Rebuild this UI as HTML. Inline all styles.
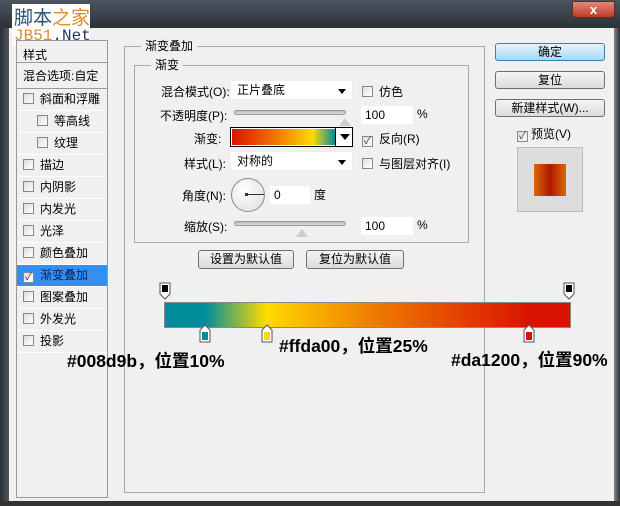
<!DOCTYPE html>
<html><head><meta charset="utf-8"><style>
*{box-sizing:border-box;margin:0;padding:0}
body{width:620px;height:506px;overflow:hidden;background:#f0f0f0;font-family:"Liberation Sans","Noto Sans CJK SC",sans-serif;font-size:12px;color:#000;position:relative}
.a{position:absolute}
.title{left:0;top:0;width:620px;height:28px;background:linear-gradient(#4a5560,#2b3138)}
.frameL{left:0;top:28px;width:9px;height:478px;background:linear-gradient(90deg,#2b3138,#555)}
.frameR{left:614px;top:28px;width:6px;height:478px;background:linear-gradient(90deg,#888,#2b3138)}
.frameB{left:0;top:501px;width:620px;height:5px;background:#333}
.close{left:572px;top:1px;width:43px;height:17px;border-radius:0 0 4px 4px;background:linear-gradient(#e08a7a,#c0392b);border:1px solid #6a2a22;color:#fff;font-weight:bold;text-align:center;font-size:13px;line-height:15px}
.wm{left:12px;top:4px;width:78px;height:42px;background:#fff}
.panel{left:16px;top:40px;width:92px;height:458px;border:1px solid #999;background:#f0f0f0}
.row{position:absolute;left:0;width:90px;height:22px;border-bottom:1px solid #fff;line-height:21px;font-size:12px}
.cb{display:inline-block;width:11px;height:11px;border:1px solid #888;background:linear-gradient(135deg,#ddd,#fff);vertical-align:-1px;margin-right:6px}
.grp{border:1px solid #aaa}
.lbl{position:absolute;background:#f0f0f0;padding:0 4px;font-size:12px}
.sel{position:absolute;background:#fff;height:20px;border:1px solid #eee;line-height:19px;padding-left:6px}
.sel:after{content:"";position:absolute;right:6px;top:8px;border:4px solid transparent;border-top:5px solid #000}
.btn{position:absolute;border:1px solid #707070;border-radius:3px;background:linear-gradient(#f4f4f4,#dcdcdc);text-align:center;line-height:16px;font-size:12px}
.slider{position:absolute;height:5px;border:1px solid #999;border-radius:3px;background:linear-gradient(#bbb,#ddd)}
.inp{position:absolute;background:#fff;height:18px;padding-left:4px;line-height:18px}
.big{position:absolute;font-weight:bold;font-size:17.5px;white-space:nowrap}
</style></head><body>
<div class="a title"></div>
<div class="a frameL"></div><div class="a frameR"></div><div class="a frameB"></div>
<div class="a close">x</div>
<div class="a wm"></div>
<div class="a" style="left:14px;top:3px;font-size:19px;color:#2a4f7a">脚本<span style="color:#e08a2a">之家</span></div>
<div class="a" style="left:14px;top:27px;font-size:16px;font-family:'Liberation Mono',monospace;color:#1b3a5c"><span style="color:#e08a2a">JB51</span>.Net</div>

<div class="a panel">
<div class="row" style="top:0;padding-left:6px;height:22px;padding-top:2px;line-height:24px;border-bottom:1px solid #999">样式</div>
<div class="row" style="top:23px;padding-left:6px;height:25px;line-height:24px;border-bottom:1px solid #999">混合选项:自定</div>
<div class="row" style="top:48px;padding-left:6px"><span class="cb"></span>斜面和浮雕</div>
<div class="row" style="top:70px;padding-left:20px"><span class="cb"></span>等高线</div>
<div class="row" style="top:92px;padding-left:20px"><span class="cb"></span>纹理</div>
<div class="row" style="top:114px;padding-left:6px"><span class="cb"></span>描边</div>
<div class="row" style="top:136px;padding-left:6px"><span class="cb"></span>内阴影</div>
<div class="row" style="top:158px;padding-left:6px"><span class="cb"></span>内发光</div>
<div class="row" style="top:180px;padding-left:6px"><span class="cb"></span>光泽</div>
<div class="row" style="top:202px;padding-left:6px"><span class="cb"></span>颜色叠加</div>
<div class="row" style="top:224px;padding-left:6px;background:#3390f0;color:#102050"><span class="cb" style="font-size:10px;line-height:9px;text-align:center;color:#334">✓</span>渐变叠加</div>
<div class="row" style="top:246px;padding-left:6px"><span class="cb"></span>图案叠加</div>
<div class="row" style="top:268px;padding-left:6px"><span class="cb"></span>外发光</div>
<div class="row" style="top:290px;padding-left:6px"><span class="cb"></span>投影</div>
</div>

<div class="a grp" style="left:124px;top:46px;width:361px;height:447px"></div>
<div class="lbl" style="left:141px;top:37px">渐变叠加</div>
<div class="a grp" style="left:134px;top:65px;width:335px;height:178px"></div>
<div class="lbl" style="left:151px;top:56px">渐变</div>

<div class="a" style="left:161px;top:83px">混合模式(O):</div>
<div class="sel" style="left:230px;top:80px;width:123px">正片叠底</div>
<div class="a" style="left:362px;top:83px"><span class="cb"></span>仿色</div>
<div class="a" style="left:160px;top:107px">不透明度(P):</div>
<div class="slider" style="left:234px;top:110px;width:112px"></div>
<div class="a" style="left:339px;top:112px;width:0;height:0;border:6px solid transparent;border-bottom:8px solid #ccc;"></div>
<div class="inp" style="left:361px;top:106px;width:52px">100</div>
<div class="a" style="left:417px;top:107px">%</div>
<div class="a" style="left:194px;top:130px">渐变:</div>
<div class="a" style="left:230px;top:127px;width:123px;height:20px;border:1px solid #000;background:#fff"></div>
<div class="a" style="left:232px;top:129px;width:103px;height:16px;background:linear-gradient(90deg,#da1200,#f07000 40%,#ffda00 78%,#008d9b)"></div>
<div class="a" style="left:335px;top:128px;width:1px;height:18px;background:#000"></div>
<div class="a" style="left:340px;top:134px;border:5px solid transparent;border-top:6px solid #000"></div>
<div class="a" style="left:362px;top:130px"><span class="cb" style="font-size:10px;line-height:9px;text-align:center;color:#335">✓</span>反向(R)</div>
<div class="a" style="left:184px;top:155px">样式(L):</div>
<div class="sel" style="left:230px;top:151px;width:123px">对称的</div>
<div class="a" style="left:362px;top:155px"><span class="cb"></span>与图层对齐(I)</div>
<div class="a" style="left:182px;top:187px">角度(N):</div>
<div class="a" style="left:231px;top:178px;width:34px;height:34px;border-radius:50%;border:1px solid #888;background:radial-gradient(circle at 40% 35%,#fff,#ddd)"></div>
<div class="a" style="left:246px;top:194px;width:18px;height:1px;background:#333"></div>
<div class="a" style="left:245px;top:193px;width:3px;height:3px;background:#333"></div>
<div class="inp" style="left:270px;top:186px;width:40px">0</div>
<div class="a" style="left:314px;top:186px">度</div>
<div class="a" style="left:184px;top:218px">缩放(S):</div>
<div class="slider" style="left:234px;top:221px;width:112px"></div>
<div class="a" style="left:296px;top:223px;width:0;height:0;border:6px solid transparent;border-bottom:8px solid #ccc"></div>
<div class="inp" style="left:361px;top:217px;width:52px">100</div>
<div class="a" style="left:417px;top:218px">%</div>

<div class="btn" style="left:198px;top:250px;width:96px;height:19px;line-height:17px">设置为默认值</div>
<div class="btn" style="left:306px;top:250px;width:98px;height:19px;line-height:17px">复位为默认值</div>

<div class="a" style="left:164px;top:302px;width:407px;height:26px;border:1px solid #888;background:linear-gradient(90deg,#008d9b 0%,#008d9b 10%,#ffda00 25%,#f08000 50%,#da1200 90%,#da1200 100%)"></div>
<svg class="a" style="left:158px;top:282px" width="420" height="66">
<g stroke="#555" fill="#fff"><path d="M2 1h10v11l-5 5-5-5z"/><path d="M406 1h10v11l-5 5-5-5z"/>
<path d="M42 48l5-5 5 5v12h-10z"/><path d="M104 48l5-5 5 5v12h-10z"/><path d="M366 48l5-5 5 5v12h-10z"/></g>
<rect x="4" y="3" width="6" height="7" fill="#000"/><rect x="408" y="3" width="6" height="7" fill="#000"/>
<rect x="44" y="50" width="6" height="8" fill="#008d9b"/><rect x="106" y="50" width="6" height="8" fill="#ffda00"/><rect x="368" y="50" width="6" height="8" fill="#da1200"/>
</svg>
<div class="big" style="left:67px;top:348px">#008d9b，位置10%</div>
<div class="big" style="left:279px;top:333px">#ffda00，位置25%</div>
<div class="big" style="left:451px;top:347px">#da1200，位置90%</div>

<div class="btn" style="left:495px;top:43px;width:110px;height:18px;border-color:#3c7fb1;background:linear-gradient(#e5f4fc,#a7d9f5)">确定</div>
<div class="btn" style="left:495px;top:71px;width:110px;height:18px">复位</div>
<div class="btn" style="left:495px;top:99px;width:110px;height:18px">新建样式(W)...</div>
<div class="a" style="left:517px;top:125px"><span class="cb" style="margin-right:3px;font-size:10px;line-height:9px;text-align:center;color:#335">✓</span>预览(V)</div>
<div class="a" style="left:517px;top:147px;width:66px;height:65px;border:1px solid #bbb;background:#ddd"></div>
<div class="a" style="left:534px;top:164px;width:32px;height:32px;background:linear-gradient(90deg,#d86a00,#b01800 50%,#d86a00)"></div>
</body></html>
